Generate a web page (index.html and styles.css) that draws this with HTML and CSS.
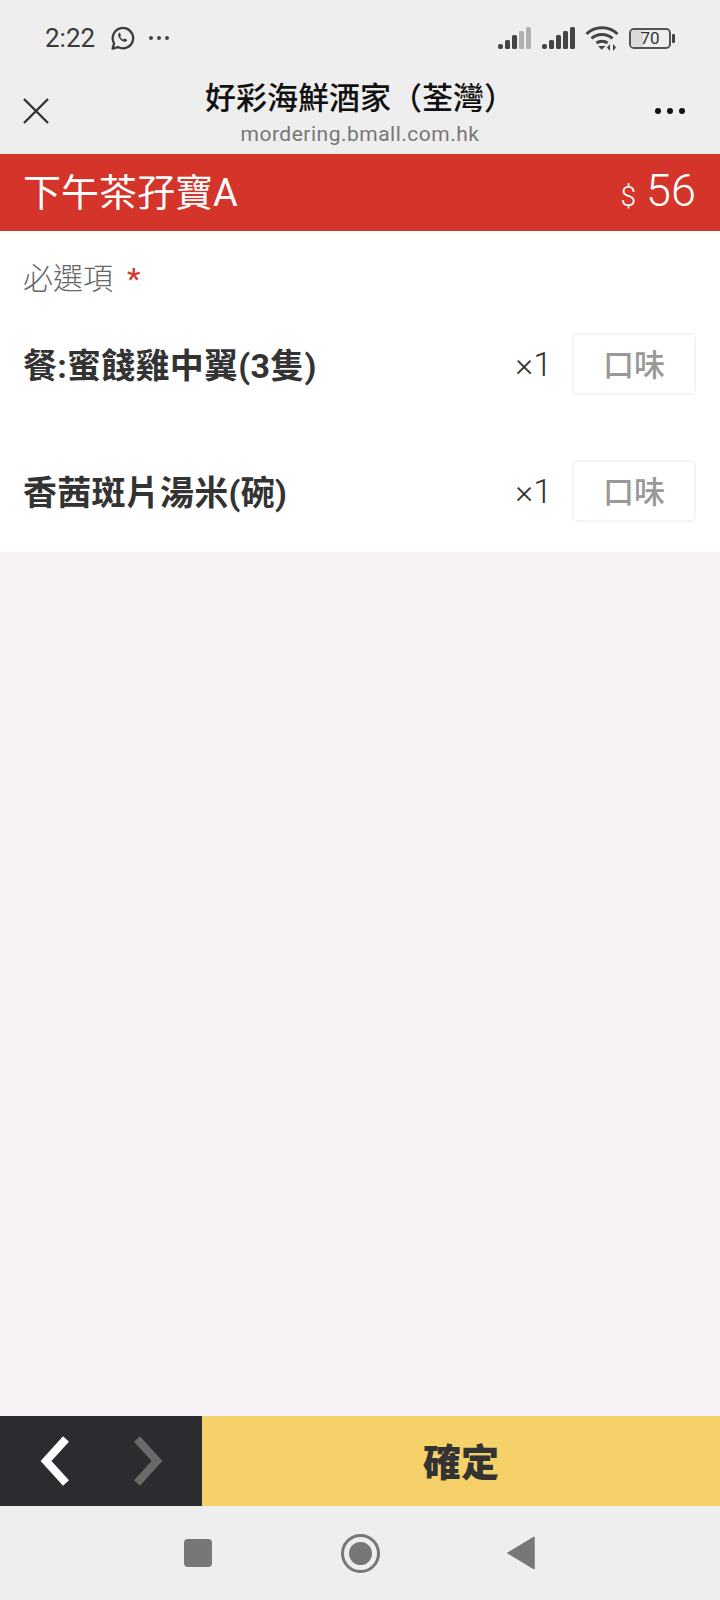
FILE: index.html
```html
<!DOCTYPE html>
<html lang="zh-Hant">
<head>
<meta charset="utf-8">
<title>下午茶孖寶A</title>
<link rel="stylesheet" href="styles.css">
</head>
<body>
<div class="app">
  <header class="top">
    <div class="status">
      <div class="status-left">
        <span class="time">2:22</span>
        <svg class="wa" width="25" height="25" viewBox="0 0 25 25"><path d="M2.600 22.600l1.500-5.300A10.200 10.200 0 1 1 8 21.100z" fill="none" stroke="#3c3c3c" stroke-width="2.300" stroke-linejoin="round"/><path d="M9 7.200c-.9.700-1.200 1.900-.6 3.300 1 2.300 2.800 4.100 5.200 5.100 1.400.5 2.700.2 3.300-.9.300-.5.200-.9-.2-1.100l-1.800-.9c-.4-.2-.7-.1-.9.200l-.6.700c-1.500-.6-2.600-1.700-3.300-3.200l.6-.7c.2-.3.300-.5.100-.9l-.8-1.800c-.2-.4-.7-.4-1-.1z" fill="#3c3c3c"/></svg>
        <svg class="dots-small" width="24" height="6" viewBox="0 0 24 6"><circle cx="4" cy="3" r="2" fill="#444"/><circle cx="12" cy="3" r="2" fill="#444"/><circle cx="20" cy="3" r="2" fill="#444"/></svg>
      </div>
      <div class="status-right">
        <svg width="34" height="24" viewBox="0 0 34 24"><g fill="#444"><rect x="0" y="18" width="5" height="5" rx="2"/><rect x="7" y="14" width="5" height="9" rx="1.500"/><rect x="14" y="9" width="5" height="14" rx="1.500"/></g><g fill="#b0b0b0"><rect x="21" y="5" width="5" height="18" rx="1.500"/><rect x="28" y="1" width="5" height="22" rx="1.500"/></g></svg>
        <svg width="34" height="24" viewBox="0 0 34 24" fill="#444"><rect x="0" y="18" width="5" height="5" rx="2"/><rect x="7" y="14" width="5" height="9" rx="1.500"/><rect x="14" y="9" width="5" height="14" rx="1.500"/><rect x="21" y="5" width="5" height="18" rx="1.500"/><rect x="28" y="1" width="5" height="22" rx="1.500"/></svg>
        <svg class="wifi" width="34" height="26" viewBox="0 0 34 26"><g fill="none" stroke="#444" stroke-width="3"><path d="M1.500 9C9.500 .5 24.500 .5 32.500 9"/><path d="M6.500 13.500C12 8 22 8 27.500 13.500"/><path d="M11.500 18C14.500 15.500 19.500 15.500 22.500 18"/></g><path d="M13 21h7.500l-3.700 3.700z" fill="#444"/><path d="M25 26v-7l-3 3.500zM28 19v7l3-3.500z" fill="#444"/></svg>
        <div class="battery"><div class="battery-body"><div class="battery-fill"></div><span class="battery-text">70</span></div><div class="battery-tip"></div></div>
      </div>
    </div>
    <div class="nav">
      <svg class="close" width="26" height="26" viewBox="0 0 26 26"><path d="M1 1l24 24M25 1L1 25" stroke="#333" stroke-width="2.400" fill="none"/></svg>
      <div class="titles">
        <div class="title">好彩海鮮酒家（荃灣）</div>
        <div class="url">mordering.bmall.com.hk</div>
      </div>
      <svg class="more" width="32" height="8" viewBox="0 0 32 8"><circle cx="4" cy="4" r="3" fill="#111"/><circle cx="16" cy="4" r="3" fill="#111"/><circle cx="28" cy="4" r="3" fill="#111"/></svg>
    </div>
  </header>

  <section class="banner">
    <div class="banner-name">下午茶孖寶A</div>
    <div class="banner-price"><span class="currency">$</span><span class="amount">56</span></div>
  </section>

  <section class="options">
    <div class="required">必選項<span class="star">*</span></div>
    <div class="row row-first">
      <div class="row-name">餐:蜜餞雞中翼(3隻)</div>
      <div class="qty">×1</div>
      <button class="flavor">口味</button>
    </div>
    <div class="row">
      <div class="row-name">香茜斑片湯米(碗)</div>
      <div class="qty">×1</div>
      <button class="flavor">口味</button>
    </div>
  </section>

  <main class="spacer"></main>

  <section class="actions">
    <div class="arrows">
      <svg width="30" height="50" viewBox="0 0 30 50"><path d="M27 3L7 25l20 22" fill="none" stroke="#fff" stroke-width="8"/></svg>
      <svg width="30" height="50" viewBox="0 0 30 50"><path d="M4 3l20 22L4 47" fill="none" stroke="#6a6a6a" stroke-width="8"/></svg>
    </div>
    <button class="confirm">確定</button>
  </section>

  <footer class="sysnav">
    <div class="sys-square"></div>
    <div class="sys-circle"><div class="sys-dot"></div></div>
    <svg width="28" height="34" viewBox="0 0 28 34"><path d="M27 1.500v31L1 17z" fill="#777" stroke="#777" stroke-width="1.500" stroke-linejoin="round"/></svg>
  </footer>
</div>
</body>
</html>
```
FILE: styles.css
```css
* { box-sizing: border-box; }
html, body { margin: 0; padding: 0; }
body { font-family: Roboto, "Noto Sans CJK TC", sans-serif; background: #eee; }
.app { width: 720px; height: 1600px; display: flex; flex-direction: column; overflow: hidden; }

.top { height: 154px; background: #eeeeee; display: flex; flex-direction: column; }
.status { height: 76px; padding: 0 45px 0 45px; display: flex; justify-content: space-between; align-items: center; }
.status-left { display: flex; align-items: center; }
.time { font-size: 26px; color: #3a3a3a; line-height: 30px; }
.wa { margin-left: 15px; }
.dots-small { margin-left: 12px; }
.status-right { display: flex; align-items: center; gap: 10px; }
.wifi { margin-left: -1px; }
.battery { display: flex; align-items: center; }
.battery-body { position: relative; width: 42px; height: 21px; border: 2px solid #555; border-radius: 5px; overflow: hidden; }
.battery-fill { width: 12px; height: 100%; background: #dadada; }
.battery-text { position: absolute; inset: 0; font-size: 17px; line-height: 17px; text-align: center; color: #333; }
.battery-tip { width: 3px; height: 9px; margin-left: 1px; background: #444; border-radius: 1px; }

.nav { flex: 1; position: relative; display: flex; align-items: flex-start; justify-content: center; }
.titles { text-align: center; }
.title { font-size: 31px; font-weight: 500; line-height: 40px; color: #111; margin-top: 3px; }
.url { font-size: 21px; line-height: 24px; color: #777; letter-spacing: .5px; margin-top: 3px; }
.close { position: absolute; left: 23px; top: 22px; }
.more { position: absolute; left: 654px; top: 31px; }

.banner { height: 77px; background: #d43429; color: #fff; padding: 0 24px 0 23px; display: flex; align-items: center; justify-content: space-between; }
.banner-name { font-size: 38px; font-weight: 400; line-height: 48px; }
.banner-price { display: flex; align-items: baseline; gap: 10px; font-weight: 300; margin-top: -4px; }
.currency { font-size: 28px; }
.amount { font-size: 45px; }

.options { height: 321px; background: #fff; padding: 0 24px 0 23px; }
.required { font-size: 30px; font-weight: 300; line-height: 40px; color: #666; margin-top: 28px; }
.star { color: #cf3a30; font-size: 30px; font-weight: 500; margin-left: 14px; }
.row { display: flex; align-items: center; height: 62px; margin-top: 65px; }
.row-first { margin-top: 34px; }
.row-name { flex: 1; font-size: 34px; font-weight: 700; color: #333; line-height: 40px; margin-top: 3px; letter-spacing: .25px; }
.qty { font-size: 34px; font-weight: 300; color: #333; margin-right: 20px; }
.flavor { width: 124px; height: 62px; padding: 0 0 4px; background: #fff; border: 2px solid #f4f4f4; border-radius: 6px; font-family: inherit; font-size: 31px; font-weight: 500; color: #999; }

.spacer { flex: 1; background: #f6f2f6; }

.actions { height: 90px; display: flex; }
.arrows { width: 202px; background: #2a2c2f; display: flex; align-items: center; gap: 64px; padding-left: 39px; }
.confirm { flex: 1; border: 0; padding: 0 0 4px; background: #f6d069; font-family: inherit; font-size: 38px; font-weight: 900; color: #333; }

.sysnav { height: 94px; background: #eeeeee; display: flex; align-items: center; padding: 0 0 0 184px; }
.sys-square { width: 28px; height: 28px; border-radius: 4px; background: #777; }
.sys-circle { width: 39px; height: 39px; margin-left: 129px; border: 3px solid #777; border-radius: 50%; display: flex; align-items: center; justify-content: center; }
.sys-dot { width: 23px; height: 23px; border-radius: 50%; background: #777; }
.sysnav svg { margin-left: 127px; }
```
